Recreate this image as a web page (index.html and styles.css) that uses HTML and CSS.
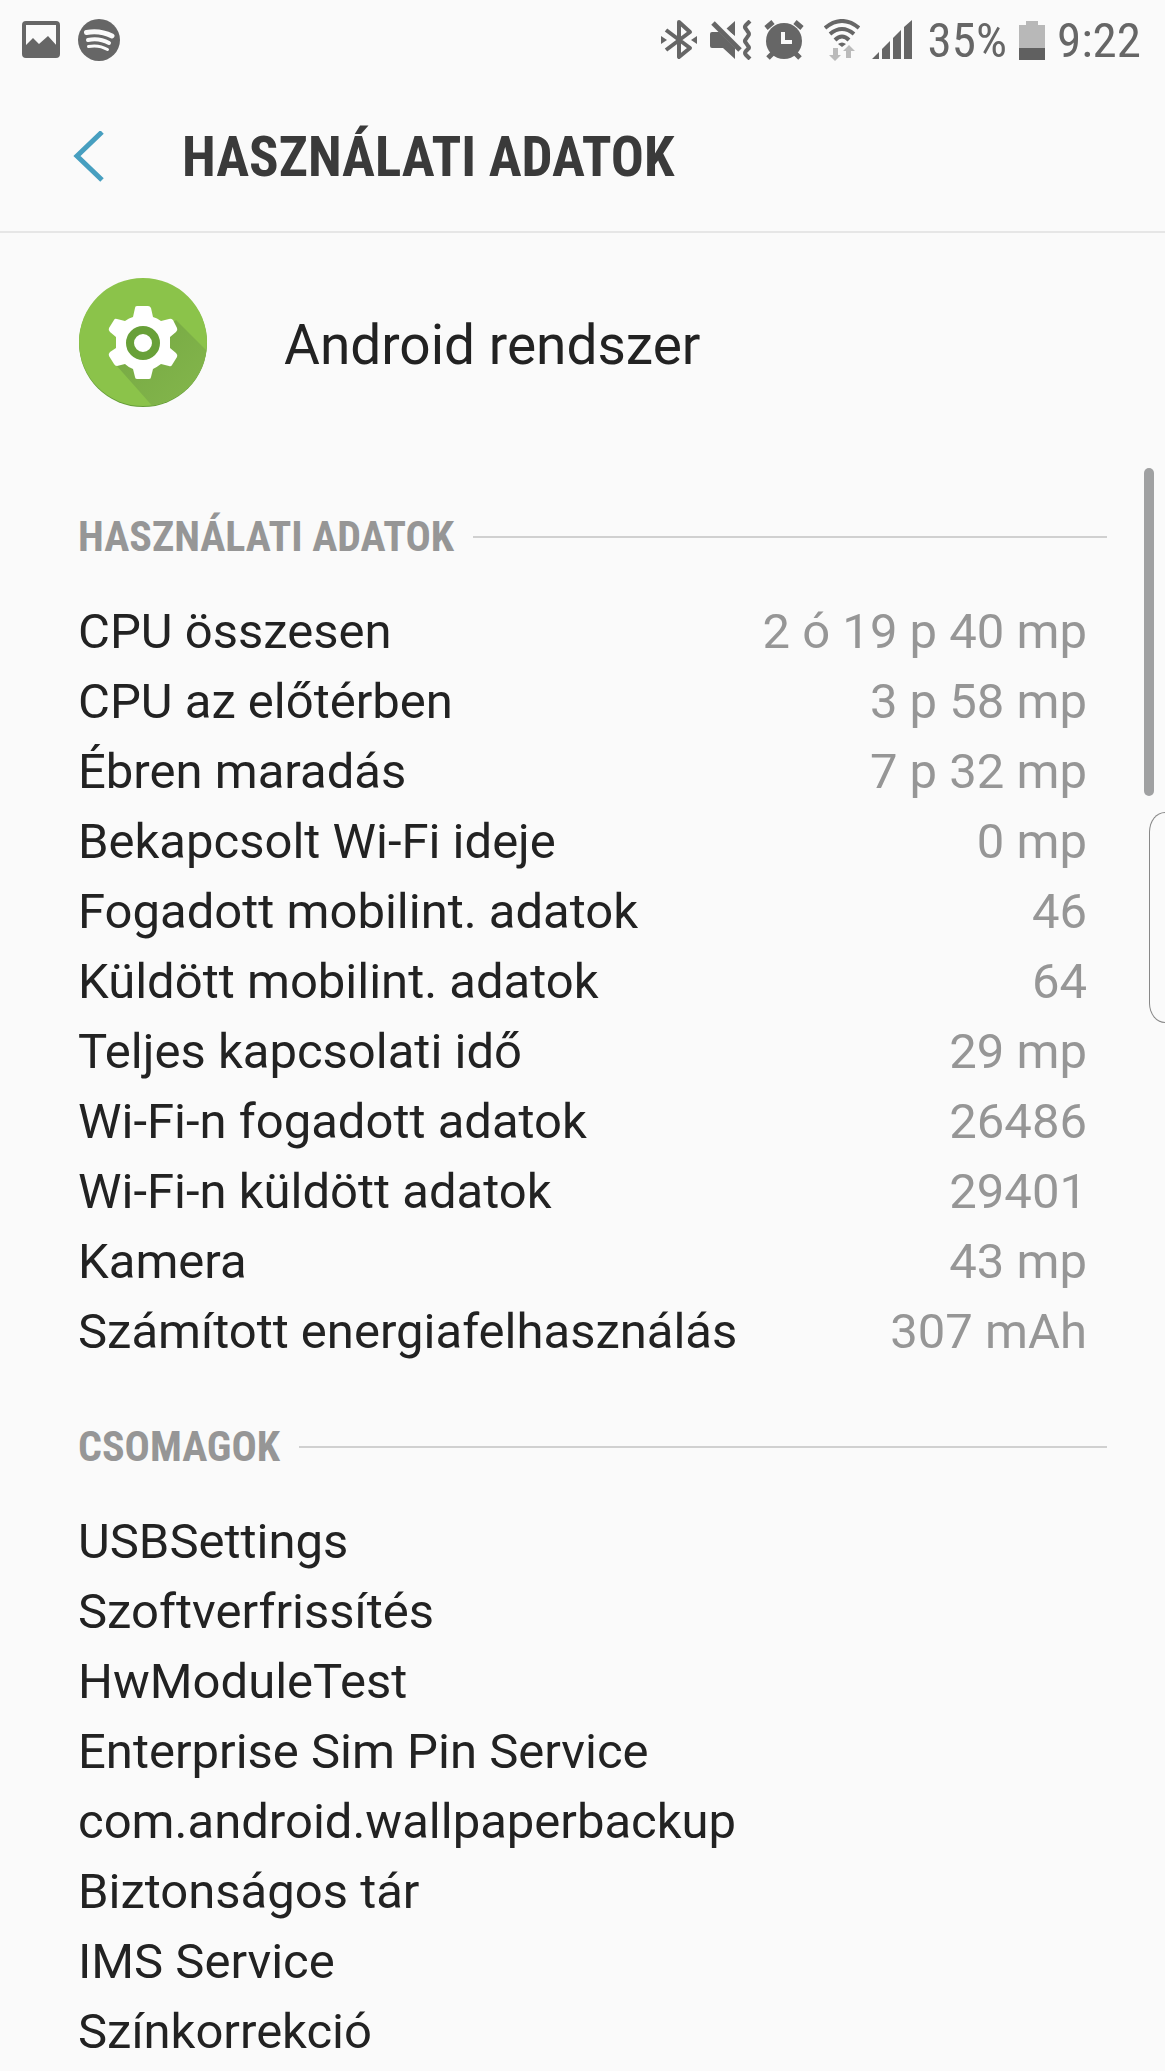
FILE: index.html
```html
<!DOCTYPE html>
<html lang="hu">
<head>
<meta charset="utf-8">
<meta name="viewport" content="width=device-width, initial-scale=1">
<title>Használati adatok</title>
<link rel="stylesheet" href="styles.css">
</head>
<body>
<div class="status">
  <div class="status-group status-left">
    <svg width="38" height="38" viewBox="0 0 38 38" aria-hidden="true"><rect x="2" y="2" width="34" height="33" rx="2" fill="none" stroke="#666" stroke-width="4"/><path d="M2 26 11 17 17 23 26 15 36 26V35H2z" fill="#666"/></svg>
    <svg width="42" height="42" viewBox="0 0 42 42" aria-hidden="true"><circle cx="21" cy="21" r="21" fill="#666"/><g fill="none" stroke="#fafafa" stroke-linecap="round"><path d="M8.500 13.500Q22 11 34 17" stroke-width="5"/><path d="M10 21Q21 18.500 31 24" stroke-width="4"/><path d="M10.500 27.500Q21 25.500 29.500 30.500" stroke-width="3"/></g></svg>
  </div>
  <div class="status-group status-right">
    <svg width="38" height="42" viewBox="0 0 38 42" aria-hidden="true"><path d="M6 11 30 29 19 38V3L30 13 6 31" fill="none" stroke="#666" stroke-width="4" stroke-linejoin="round"/><path d="M1 17 7 21 1 25zM37 17 31 21 37 25z" fill="#666"/></svg>
    <svg width="42" height="40" viewBox="0 0 42 40" aria-hidden="true"><path d="M2 12H9L25 28V39L13 28H2Q0 28 0 26V14Q0 12 2 12zM16 9 25 1V16z" fill="#666"/><path d="M6 0 33 27" stroke="#fafafa" stroke-width="3"/><path d="M3 3 30 30" stroke="#666" stroke-width="5"/><path d="M40 1 36 5Q34 7 36 9L38 12Q40 14 38 16L36 19Q34 21 36 23L38 26Q40 28 38 29L36 31Q34 33 36 35L40 39" fill="none" stroke="#666" stroke-width="4"/></svg>
    <svg width="40" height="40" viewBox="0 0 40 40" aria-hidden="true"><circle cx="20" cy="21" r="18" fill="#666"/><path d="M2 8 9 2M38 8 31 2M4 38 10 32M36 38 30 32" stroke="#666" stroke-width="5"/><path d="M19 12V22H28" fill="none" stroke="#fafafa" stroke-width="4"/></svg>
    <svg class="wifi" width="36" height="42" viewBox="0 0 36 42" aria-hidden="true"><g fill="none" stroke="#666" stroke-width="4"><path d="M1 9Q18-5 35 9"/><path d="M6 15Q18 5 30 15"/><path d="M11 21Q18 14 25 21"/></g><path d="M14 25Q18 22 22 25L18 28z" fill="#666"/><path d="M9 29H14V36H17L11 42 5 36H9zM22 39V32H19L25 26 31 32H27V39z" fill="#bbb"/></svg>
    <svg width="40" height="40" viewBox="0 0 40 40" aria-hidden="true"><path d="M0 39 7 32V39zM10 29 18 21V39H10zM21 18 29 10V39H21zM32 7 40 0V39H32z" fill="#666"/></svg>
    <span class="percent">35%</span>
    <svg width="26" height="40" viewBox="0 0 26 40" aria-hidden="true"><path d="M0 5H7V1H19V5H26V28H0z" fill="#b8b8b8"/><path d="M0 28H26V40H0z" fill="#606060"/></svg>
    <time>9:22</time>
  </div>
</div>
<header class="header">
  <button class="back" type="button" aria-label="Vissza"><svg width="32" height="52" viewBox="0 0 32 52" aria-hidden="true"><path d="M29 1 4 25 29 49" fill="none" stroke="#479fc0" stroke-width="5"/></svg></button>
  <h1 class="title">HASZNÁLATI ADATOK</h1>
</header>
<main class="content">
  <div class="app">
    <svg width="130" height="130" viewBox="0 0 130 130" aria-hidden="true">
      <defs><clipPath id="disc"><circle cx="65" cy="64" r="64"/></clipPath>
      <linearGradient id="shade" x1="0" y1="0" x2="1" y2="1"><stop offset="0" stop-color="#75a743"/><stop offset="1" stop-color="#86b94d"/></linearGradient></defs>
      <circle cx="65" cy="65" r="64" fill="#659d38"/><circle cx="65" cy="64" r="64" fill="#8bc34a"/>
      <path d="M38 87 98 42 140 84V140H85z" fill="url(#shade)" clip-path="url(#disc)"/>
      <path d="M59 28H70Q72 28 73 30L75 39Q79 40 83 43L91 41Q93 40 95 42L99 50Q100 52 98 54L92 59V70L98 75Q100 77 99 79L94 87Q93 89 91 88L83 86Q79 89 75 91L73 99Q73 101 71 101H59Q57 101 57 99L55 91Q50 89 47 86L39 88Q37 88 36 86L31 78Q30 76 32 74L38 70V59L32 54Q30 52 31 50L36 42Q37 40 39 41L47 43Q51 40 55 39L57 30Q57 28 59 28z" fill="#fff"/>
      <circle cx="65" cy="65" r="13" fill="#fff" stroke="#68a038" stroke-width="8"/>
    </svg>
    <h2 class="app-name">Android rendszer</h2>
  </div>
  <section class="section">
    <h3 class="section-title">HASZNÁLATI ADATOK</h3>
    <table class="stats">
      <tr><th scope="row">CPU összesen</th><td>2 ó 19 p 40 mp</td></tr>
      <tr><th scope="row">CPU az előtérben</th><td>3 p 58 mp</td></tr>
      <tr><th scope="row">Ébren maradás</th><td>7 p 32 mp</td></tr>
      <tr><th scope="row">Bekapcsolt Wi-Fi ideje</th><td>0 mp</td></tr>
      <tr><th scope="row">Fogadott mobilint. adatok</th><td>46</td></tr>
      <tr><th scope="row">Küldött mobilint. adatok</th><td>64</td></tr>
      <tr><th scope="row">Teljes kapcsolati idő</th><td>29 mp</td></tr>
      <tr><th scope="row">Wi-Fi-n fogadott adatok</th><td>26486</td></tr>
      <tr><th scope="row">Wi-Fi-n küldött adatok</th><td>29401</td></tr>
      <tr><th scope="row">Kamera</th><td>43 mp</td></tr>
      <tr><th scope="row">Számított energiafelhasználás</th><td>307 mAh</td></tr>
    </table>
  </section>
  <section class="section">
    <h3 class="section-title">CSOMAGOK</h3>
    <ul class="packages">
      <li>USBSettings</li>
      <li>Szoftverfrissítés</li>
      <li>HwModuleTest</li>
      <li>Enterprise Sim Pin Service</li>
      <li>com.android.wallpaperbackup</li>
      <li>Biztonságos tár</li>
      <li>IMS Service</li>
      <li>Színkorrekció</li>
    </ul>
  </section>
</main>
<div class="scrollbar"></div>
<div class="edge-handle"></div>
</body>
</html>
```
FILE: styles.css
```css
* { box-sizing: border-box; }
body {
  margin: 0;
  position: relative;
  overflow-x: hidden;
  background: #fafafa;
  color: #222;
  font-family: Roboto, "Noto Sans", sans-serif;
}
svg { display: block; flex: none; }
h1, h2, h3, ul { margin: 0; padding: 0; }

.status {
  display: flex;
  justify-content: space-between;
  height: 80px;
  padding: 0 24px 0 22px;
  color: #666;
  font: 400 49px/78px "Roboto Condensed", "Liberation Sans Narrow", Roboto, sans-serif;
}
.status-group { display: flex; align-items: center; }
.status-left { gap: 18px; }
.status-right { gap: 12px; }
.status-right span, .status-right time { padding-top: 2px; }
.wifi { margin-left: 8px; }
.percent { margin-left: 4px; }

.header {
  display: flex;
  align-items: center;
  gap: 77px;
  height: 153px;
  padding: 2px 73px 0;
  border-bottom: 2px solid #e6e6e6;
}
.back { padding: 0; border: 0; background: none; cursor: pointer; }
.title {
  color: #3a3a3a;
  font: 700 55px/80px "Roboto Condensed", "Liberation Sans Narrow", Roboto, sans-serif;
}

.content { padding: 0 58px 0 78px; }
.app {
  display: flex;
  align-items: center;
  gap: 76px;
  padding: 45px 0 99px;
}
.app-name { padding-top: 4px; font-size: 55px; line-height: 70px; font-weight: 400; }

.section + .section { padding-top: 50px; }
.section-title {
  display: flex;
  align-items: center;
  gap: 19px;
  color: #969696;
  font: 700 42px/60px "Roboto Condensed", "Liberation Sans Narrow", Roboto, sans-serif;
}
.section-title::after {
  content: "";
  flex: 1;
  height: 2px;
  background: #d0d0d0;
}
.stats, .packages {
  margin-top: 30px;
  font-size: 49px;
  line-height: 70px;
}
.stats { width: 100%; border-collapse: collapse; }
.stats th { padding: 0; font-weight: 400; text-align: left; }
.stats td { padding: 0 20px 0 0; color: #969696; text-align: right; }
.packages { list-style: none; }

.scrollbar {
  position: absolute;
  top: 468px;
  right: 11px;
  width: 10px;
  height: 328px;
  border-radius: 5px;
  background: #a0a1a2;
}
.edge-handle {
  position: absolute;
  top: 812px;
  right: 0;
  width: 16px;
  height: 211px;
  border: 1px solid #888;
  border-right: 0;
  border-radius: 16px 0 0 16px / 20px 0 0 20px;
}
```
